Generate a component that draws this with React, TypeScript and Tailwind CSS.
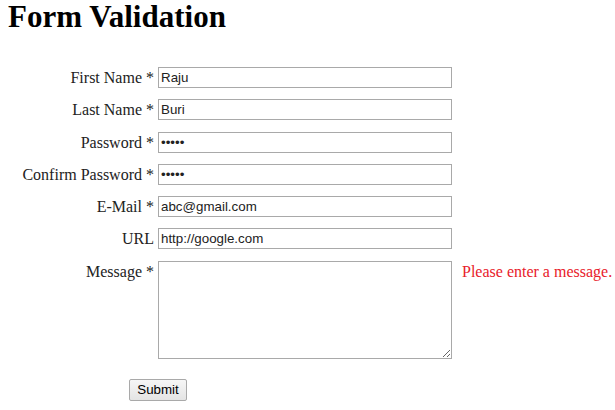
import { type ReactNode } from "react";

const inputCls =
  "block w-[294px] h-[21px] border border-[#a9a9a9] bg-white px-[2px] text-[13.33px] text-[#222] outline-none [font-family:Arial,'Liberation_Sans',sans-serif]";

function Row({ label, children, error }: { label: string; children: ReactNode; error?: string }) {
  return (
    <>
      <label className="text-right pt-[1px] leading-[19px]">{label}</label>
      <div>{children}</div>
      <div className="text-[#e8202a] pl-[6px] pt-[1px] leading-[19px]">{error}</div>
    </>
  );
}

export default function App() {
  return (
    <div className="w-[615px] h-[410px] bg-white text-[#222] text-[16px] [font-family:'Liberation_Serif','Times_New_Roman',serif] overflow-hidden">
      <h1 className="m-0 pl-2 text-[31px] leading-[36px] font-bold text-black -mt-px">Form Validation</h1>
      <form className="mt-[32px] ml-2">
        <div className="grid grid-cols-[146px_294px_auto] gap-x-[4px] gap-y-[11.3px] items-start">
          <Row label="First Name *">
            <input className={inputCls} defaultValue="Raju" />
          </Row>
          <Row label="Last Name *">
            <input className={inputCls} defaultValue="Buri" />
          </Row>
          <Row label="Password *">
            <input type="password" className={inputCls} defaultValue="12345" />
          </Row>
          <Row label="Confirm Password *">
            <input type="password" className={inputCls} defaultValue="12345" />
          </Row>
          <Row label="E-Mail *">
            <input className={inputCls} defaultValue="abc@gmail.com" />
          </Row>
          <Row label="URL">
            <input className={inputCls} defaultValue="http://google.com" />
          </Row>
          <Row label="Message *" error="Please enter a message.">
            <textarea className="block w-[294px] h-[98px] border border-[#a9a9a9] bg-white px-[2px] outline-none resize" />
          </Row>
        </div>
        <button
          type="button"
          className="mt-[20px] ml-[121px] h-[22px] w-[58px] border border-[#a9a9a9] rounded-[2px] bg-gradient-to-b from-[#f6f6f6] to-[#e4e4e4] text-[13.33px] text-black [font-family:Arial,'Liberation_Sans',sans-serif]"
        >
          Submit
        </button>
      </form>
    </div>
  );
}
